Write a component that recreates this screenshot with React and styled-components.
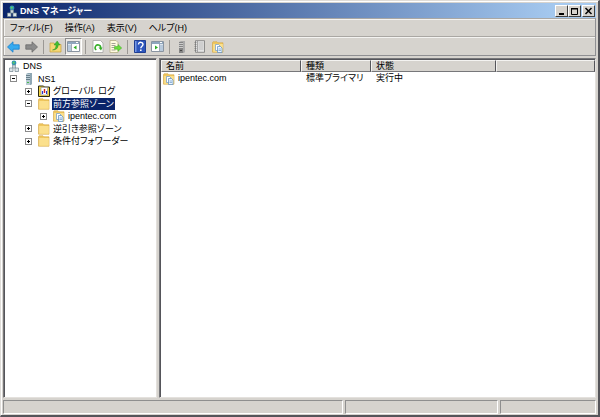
import React from "react";
import styled, { createGlobalStyle, css } from "styled-components";

const face = "#d6d3ce";

const GlobalStyle = createGlobalStyle`
  * {
    box-sizing: border-box;
  }

  body {
    margin: 0;
    font-family: "Liberation Sans", "Noto Sans CJK JP", sans-serif;
    font-size: 9px;
    font-feature-settings: "palt";
    color: #000;
    cursor: default;
  }

  button {
    margin: 0;
    padding: 0;
    border: 0;
    background: none;
    font: inherit;
    font-feature-settings: inherit;
    color: inherit;
  }

  svg {
    display: block;
    flex: none;
  }
`;

const Window = styled.div`
  min-height: 100vh;
  display: flex;
  flex-direction: column;
  padding: 1px 2px 1px 1px;
  background: ${face};
  border-style: solid;
  border-width: 1px 2px 2px 1px;
  border-color: #dfdcd8 #55555a #55555a #dfdcd8;
  box-shadow: inset 1px 1px 0 #fff;
`;

const TitleBar = styled.header`
  display: flex;
  align-items: center;
  height: 15px;
  margin: 1px 0 0 1px;
  padding: 0 1px 0 3px;
  background: linear-gradient(to right, #0a246a, #a6caf0 94%);
`;

const Title = styled.h1`
  flex: 1;
  margin: 0 0 0 2px;
  font-size: 9px;
  line-height: 14px;
  font-weight: 700;
  color: #fff;
`;

const CaptionButton = styled.button`
  width: 13px;
  height: 12px;
  display: flex;
  align-items: center;
  justify-content: center;
  background: ${face};
  border: 1px solid;
  border-color: #fff #404040 #404040 #fff;
  margin-left: ${(props) => (props.$apart ? 1 : 0)}px;
`;

const Bars = styled.div`
  margin-left: 1px;
  border: 1px solid;
  border-color: #aaa7a3 #8f8f92 #8f8f92 #aaa7a3;
  box-shadow: inset 1px 1px 0 #f4f3f1;
`;

const MenuBar = styled.nav`
  display: flex;
  align-items: center;
  height: 18px;
  border-bottom: 1px solid #aaa7a3;
`;

const MenuItem = styled.button`
  padding: 0 6px;
  line-height: 16px;
`;

const ToolBar = styled.div`
  display: flex;
  align-items: center;
  gap: 1px;
  height: 18px;
  padding-left: 1px;
  border-top: 1px solid #f4f3f1;
`;

const ToolButton = styled.button`
  width: 17px;
  height: 17px;
  display: flex;
  align-items: center;
  justify-content: center;
  ${(props) =>
    props.$pressed &&
    css`
      background: #eceae7;
      border: 1px solid;
      border-color: #8c8c8c #fff #fff #8c8c8c;
    `}
`;

const Separator = styled.div`
  width: 5px;
  height: 14px;
  display: flex;
  justify-content: center;

  &::before {
    content: "";
    width: 1px;
    background: #9b9894;
  }
`;

const Panes = styled.main`
  flex: 1;
  display: flex;
  gap: 2px;
  margin: 2px 0 0 1px;
`;

const Pane = styled.section`
  background: #fff;
  border: 1px solid;
  border-color: #77777a #e4e1dd #e4e1dd #77777a;
  box-shadow: inset 1px 1px 0 #55555a;
`;

const TreePane = styled(Pane)`
  width: 154px;
  padding: 1px 0 0 4px;
`;

const ListPane = styled(Pane)`
  flex: 1;
  min-width: 0;
  padding: 1px 0 0 1px;
`;

const Tree = styled.ul`
  margin: 0;
  padding: 0;
  list-style: none;
`;

const TreeRow = styled.li`
  display: flex;
  align-items: center;
  height: 12px;
  padding-left: ${(props) => (props.$depth ? props.$depth * 15 - 13 : 0)}px;

  &:nth-child(even) {
    height: 13px;
  }
`;

const Expander = styled.button`
  width: 7px;
  height: 7px;
  margin-right: 6px;
  background: #fff;
  border: 1px solid #8a8a8a;
`;

const TreeLabel = styled.span`
  margin-left: 2px;
  padding: 0 1px;
  line-height: 12px;
  white-space: nowrap;
  ${(props) =>
    props.$selected &&
    css`
      color: #fff;
      background: #0a246a;
    `}
`;

const List = styled.table`
  width: 100%;
  table-layout: fixed;
  border-collapse: separate;
  border-spacing: 0;
`;

const HeaderCell = styled.th`
  width: ${(props) => props.$width};
  height: 12px;
  padding: 0 4px;
  line-height: 10px;
  font-weight: 400;
  text-align: left;
  background: ${face};
  border: 1px solid;
  border-color: #f4f3f1 #55555a #77777a #f4f3f1;
`;

const Cell = styled.td`
  height: 13px;
  padding: 0 5px;
  line-height: 13px;
  white-space: nowrap;
`;

const NameCell = styled(Cell)`
  padding: 0 2px;
`;

const Name = styled.div`
  display: flex;
  align-items: center;
  gap: 3px;
`;

const StatusBar = styled.footer`
  display: flex;
  gap: 2px;
  height: 14px;
  margin: 2px 0 0 1px;
`;

const StatusCell = styled.div`
  flex: ${(props) => props.$flex};
  border: 1px solid;
  border-color: #8f8f8f #fff #fff #8f8f8f;
`;

const DnsIcon = () => (
  <svg width="12" height="12" viewBox="0 0 12 12">
    <circle cx="6" cy="3" r="2.4" fill="#2f95b5" />
    <path d="M5 1.5l2 .5-1 2-1.500-1z" fill="#5ecb61" />
    <path d="M4.500 5h3v3h-3z" fill="#c8d4da" stroke="#71858f" strokeWidth=".6" />
    <path d="M1.500 8h3.500v3.500H1.500zM7 8h3.500v3.500H7z" fill="#dce4e8" stroke="#71858f" strokeWidth=".7" />
  </svg>
);

const ServerIcon = ({ gray }) => (
  <svg width="12" height="12" viewBox="0 0 12 12">
    <path d="M3 1l2-1h4v11l-1 1H3z" fill={gray ? "#aaa" : "#8fa7b4"} />
    <path d="M3 1h4v11H3z" fill={gray ? "#858585" : "#b9cbd4"} />
    <path d="M3 2.500h4M3 4.500h4M3 6.500h4" stroke={gray ? "#ddd" : "#536b79"} strokeWidth=".8" />
    <path d="M4 9h2v1H4z" fill={gray ? "#444" : "#49b950"} />
  </svg>
);

const FolderIcon = ({ zone }) => (
  <svg width="12" height="12" viewBox="0 0 12 12">
    <path d="M.5 1.500L1 .8h4l1 1h5v9.400H.5z" fill="#f0c75e" stroke="#d3a543" strokeWidth=".6" />
    <path d="M1.200 3h9.600v7.800H1.200z" fill="#fbe08d" />
    {zone && (
      <>
        <path d="M3.500 3.500h3l1.500 1.500v4.500H3.500z" fill="#fff" stroke="#6c96c5" strokeWidth=".7" />
        <path d="M5.500 5.500h3L10 7v4.500H5.500z" fill="#eaf4ff" stroke="#5889bf" strokeWidth=".7" />
        <path d="M6.500 8h2.500M6.500 9.500h2.500" stroke="#6c96c5" strokeWidth=".7" />
      </>
    )}
  </svg>
);

const LogIcon = () => (
  <svg width="12" height="12" viewBox="0 0 12 12">
    <path d="M.5 1h5l1 1h5v9.500H.5z" fill="#f1d340" stroke="#2b2812" />
    <path d="M3 2.500h6.500v7.500H3z" fill="#fff" stroke="#8a8aa8" strokeWidth=".6" />
    <path d="M4.500 6v3" stroke="#2635c9" strokeWidth="1.200" />
    <path d="M6.500 4v4" stroke="#d42020" strokeWidth="1.400" />
    <path d="M8.500 6v3" stroke="#2635c9" />
  </svg>
);

const ArrowIcon = ({ forward }) => (
  <svg width="13" height="12" viewBox="0 0 13 12">
    <path
      d={
        forward
          ? "M12.500 6L7 .8v3H.8v4.400H7v3z"
          : "M.5 6L6 .8v3h6.200v4.400H6v3z"
      }
      fill={forward ? "#8b8b8b" : "#35aaf0"}
      stroke={forward ? "#6b6b6b" : "#1b7fcd"}
      strokeWidth=".8"
    />
  </svg>
);

const UpIcon = () => (
  <svg width="13" height="13" viewBox="0 0 13 13">
    <path d="M1 3h4l1 1.500h6V12H1z" fill="#f5d774" stroke="#c49d3c" strokeWidth=".7" />
    <path d="M3.500 10C6 9.500 7 8 7 5H5l3.200-4L11 5H9.200c0 3-2 5-5.700 5z" fill="#43bd2f" stroke="#248c19" strokeWidth=".4" />
  </svg>
);

const PaneIcon = ({ right }) => (
  <svg width="13" height="11" viewBox="0 0 13 11">
    <path d="M.5 .5h12v10H.5z" fill="#fff" stroke="#8994a1" />
    <path d="M1 1h11v2H1z" fill="#8fa6bd" />
    <path d="M9 1.500h2" stroke="#fff" />
    <path d={right ? "M9 3.500h3v6.500H9z" : "M1 3.500h3v6.500H1z"} fill="#b7c9dc" />
    <path d={right ? "M8.500 3v7.500" : "M4.500 3v7.500"} stroke="#8994a1" strokeWidth=".8" />
    <path d={right ? "M4 4.500v4l3-2z" : "M9.500 4.500v4l-3-2z"} fill="#2fae27" />
  </svg>
);

const RefreshIcon = () => (
  <svg width="12" height="13" viewBox="0 0 12 13">
    <path d="M1 .5h7.500L11 3v9.500H1z" fill="#fff" stroke="#a5a5a5" strokeWidth=".8" />
    <path d="M4.300 10A2.800 2.800 0 1 1 8.700 8" fill="none" stroke="#35ae27" strokeWidth="1.500" />
    <path d="M6.500 7.500h4l-1.500 3z" fill="#35ae27" />
  </svg>
);

const ExportIcon = () => (
  <svg width="13" height="13" viewBox="0 0 13 13">
    <path d="M1 .5h6L9 2.500v10H1z" fill="#fffbe0" stroke="#b4ae87" strokeWidth=".8" />
    <path d="M2.500 3.500h4M2.500 5.500h4M2.500 7.500h3M2.500 10h4" stroke="#8d8d83" strokeWidth=".8" />
    <path d="M5.500 6.500H9V4.500L12.700 8 9 11.200v-2H5.500z" fill="#6bdc3c" stroke="#3ba823" strokeWidth=".5" />
  </svg>
);

const HelpIcon = () => (
  <svg width="12" height="13" viewBox="0 0 12 13">
    <path d="M.5 .5h11v12H.5z" fill="#2d56bd" stroke="#203f92" />
    <path d="M1 1h1.500v11H1z" fill="#7698e4" />
    <path d="M4.500 4.500c0-3 4.500-2.800 4.500 0C9 6.200 6.800 6.200 6.800 8.300" fill="none" stroke="#fff" strokeWidth="1.400" />
    <path d="M6 9.500h1.600v1.500H6z" fill="#fff" />
  </svg>
);

const NotebookIcon = () => (
  <svg width="12" height="13" viewBox="0 0 12 13">
    <path d="M1.500 .7h9v11.600h-9z" fill="#e4e4e4" stroke="#777" strokeWidth=".8" />
    <path d="M3.500 1v11" stroke="#888" strokeWidth=".7" />
    <path d="M4.500 3h5M4.500 5h5M4.500 7h5M4.500 9h5" stroke="#aaa" strokeWidth=".7" />
    <path d="M.5 2.500h2M.5 4.500h2M.5 6.500h2M.5 8.500h2M.5 10.500h2" stroke="#777" strokeWidth=".7" />
  </svg>
);

const menus = ["ファイル(F)", "操作(A)", "表示(V)", "ヘルプ(H)"];

const tools = [
  [
    { label: "戻る", icon: <ArrowIcon /> },
    { label: "進む", icon: <ArrowIcon forward /> }
  ],
  [
    { label: "上へ", icon: <UpIcon /> },
    { label: "ツリーの表示", icon: <PaneIcon />, pressed: true }
  ],
  [
    { label: "最新の情報に更新", icon: <RefreshIcon /> },
    { label: "一覧のエクスポート", icon: <ExportIcon /> }
  ],
  [
    { label: "ヘルプ", icon: <HelpIcon /> },
    { label: "操作ウィンドウの表示", icon: <PaneIcon right /> }
  ],
  [
    { label: "新しいサーバー", icon: <ServerIcon gray /> },
    { label: "新しいレコード", icon: <NotebookIcon /> },
    { label: "新しいゾーン", icon: <FolderIcon zone /> }
  ]
];

const nodes = [
  { name: "DNS", depth: 0, icon: <DnsIcon /> },
  { name: "NS1", depth: 1, icon: <ServerIcon />, open: true },
  { name: "グローバル ログ", depth: 2, icon: <LogIcon /> },
  { name: "前方参照ゾーン", depth: 2, icon: <FolderIcon />, open: true, selected: true },
  { name: "ipentec.com", depth: 3, icon: <FolderIcon zone /> },
  { name: "逆引き参照ゾーン", depth: 2, icon: <FolderIcon /> },
  { name: "条件付フォワーダー", depth: 2, icon: <FolderIcon /> }
];

const columns = [
  { name: "名前", width: "140px" },
  { name: "種類", width: "70px" },
  { name: "状態", width: "125px" },
  { name: "", width: "auto" }
];

export default () => (
  <Window>
    <GlobalStyle />
    <TitleBar>
      <DnsIcon />
      <Title>DNS マネージャー</Title>
      <CaptionButton aria-label="最小化">
        <svg width="9" height="8" viewBox="0 0 9 8">
          <path d="M2 6h5v2H2z" />
        </svg>
      </CaptionButton>
      <CaptionButton aria-label="最大化">
        <svg width="9" height="8" viewBox="0 0 9 8">
          <path d="M1 1.500h7M1.500 1v6.500h6V1" fill="none" stroke="#000" />
          <path d="M1 1h7v1.500H1z" />
        </svg>
      </CaptionButton>
      <CaptionButton aria-label="閉じる" $apart>
        <svg width="9" height="8" viewBox="0 0 9 8">
          <path d="M1.500 1l6 6M7.500 1l-6 6" stroke="#000" strokeWidth="1.500" />
        </svg>
      </CaptionButton>
    </TitleBar>
    <Bars>
      <MenuBar>
        {menus.map((menu) => (
          <MenuItem key={menu}>{menu}</MenuItem>
        ))}
      </MenuBar>
      <ToolBar>
        {tools.map((group, index) => (
          <React.Fragment key={index}>
            {index > 0 && <Separator />}
            {group.map(({ label, icon, pressed }) => (
              <ToolButton key={label} aria-label={label} $pressed={pressed}>
                {icon}
              </ToolButton>
            ))}
          </React.Fragment>
        ))}
      </ToolBar>
    </Bars>
    <Panes>
      <TreePane>
        <Tree>
          {nodes.map(({ name, depth, icon, open, selected }) => (
            <TreeRow key={name} $depth={depth}>
              {depth > 0 && (
                <Expander aria-label={name} aria-expanded={!!open}>
                  <svg width="5" height="5" viewBox="0 0 5 5">
                    <path d={open ? "M1 2h3v1H1z" : "M1 2h3v1H1zM2 1h1v3H2z"} />
                  </svg>
                </Expander>
              )}
              {icon}
              <TreeLabel $selected={selected}>{name}</TreeLabel>
            </TreeRow>
          ))}
        </Tree>
      </TreePane>
      <ListPane>
        <List>
          <thead>
            <tr>
              {columns.map(({ name, width }) => (
                <HeaderCell key={name} $width={width}>
                  {name}
                </HeaderCell>
              ))}
            </tr>
          </thead>
          <tbody>
            <tr>
              <NameCell>
                <Name>
                  <FolderIcon zone />
                  ipentec.com
                </Name>
              </NameCell>
              <Cell>標準プライマリ</Cell>
              <Cell>実行中</Cell>
              <Cell />
            </tr>
          </tbody>
        </List>
      </ListPane>
    </Panes>
    <StatusBar>
      <StatusCell $flex={342} />
      <StatusCell $flex={153} />
      <StatusCell $flex={95} />
    </StatusBar>
  </Window>
);
